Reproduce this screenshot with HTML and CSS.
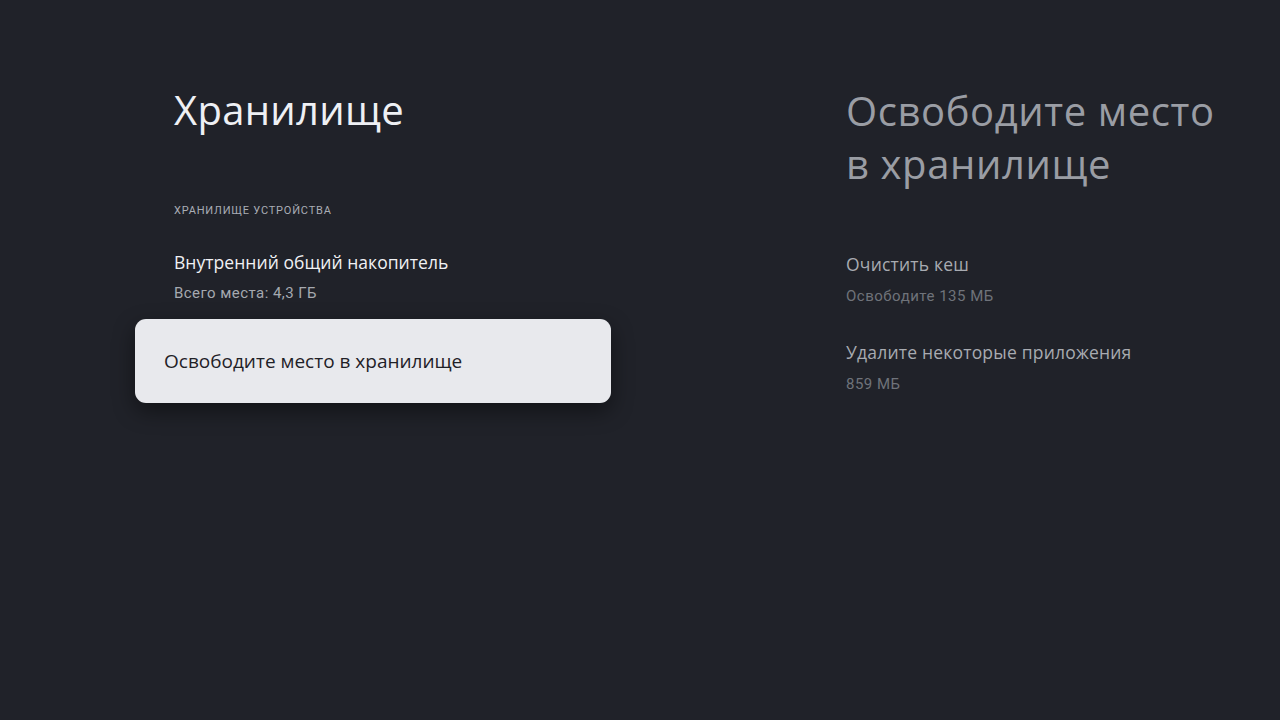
FILE: index.html
```html
<!DOCTYPE html>
<html lang="ru">
<head>
<meta charset="utf-8">
<link rel="stylesheet" href="styles.css">
</head>
<body>
<main class="screen">
  <section class="left">
    <h1 class="title">Хранилище</h1>
    <div class="category">ХРАНИЛИЩЕ УСТРОЙСТВА</div>
    <div class="item">
      <div class="item-title">Внутренний общий накопитель</div>
      <div class="item-sub">Всего места: 4,3 ГБ</div>
    </div>
    <div class="card">Освободите место в хранилище</div>
  </section>
  <section class="right">
    <h2 class="preview-title">Освободите место в&nbsp;хранилище</h2>
    <div class="preview-list">
      <div class="pitem">
        <div class="pitem-title">Очистить кеш</div>
        <div class="pitem-sub">Освободите 135 МБ</div>
      </div>
      <div class="pitem">
        <div class="pitem-title">Удалите некоторые приложения</div>
        <div class="pitem-sub">859 МБ</div>
      </div>
    </div>
  </section>
</main>
</body>
</html>
```

FILE: styles.css
```css
html, body {
  margin: 0;
  padding: 0;
  background: #202229;
}
body {
  width: 1280px;
  height: 720px;
  overflow: hidden;
  font-family: "Open Sans", "Noto Sans", sans-serif;
}
.screen {
  display: flex;
  height: 720px;
}
.left {
  width: 476px;
  margin-left: 135px;
  display: flex;
  flex-direction: column;
}
.title {
  margin: 84px 0 0 39px;
  font-weight: 400;
  font-size: 40px;
  line-height: 52px;
  color: #eef0f4;
  letter-spacing: 0.3px;
}
.category {
  margin: 68px 0 0 39px;
  font-family: Roboto, sans-serif;
  font-size: 11px;
  line-height: 14px;
  color: #a9adb5;
  letter-spacing: 0.8px;
}
.item {
  margin: 32px 0 0 39px;
}
.item-title {
  font-size: 17.5px;
  line-height: 24px;
  color: #f0f1f4;
  letter-spacing: 0.05px;
}
.item-sub {
  margin-top: 10px;
  font-family: Roboto, sans-serif;
  font-size: 15px;
  line-height: 18px;
  color: #a5a9b0;
  letter-spacing: 0.45px;
}
.card {
  margin-top: 17px;
  height: 84px;
  box-sizing: border-box;
  padding: 0 29px;
  display: flex;
  align-items: center;
  background: #e8e9ed;
  border-radius: 11px;
  font-size: 19px;
  color: #1f2127;
  box-shadow: 0 8px 22px rgba(0, 0, 0, 0.45);
}
.right {
  margin-left: 235px;
  width: 420px;
}
.preview-title {
  margin: 84px 0 0 0;
  font-weight: 400;
  font-size: 40px;
  line-height: 53px;
  color: #9a9da4;
  letter-spacing: 0.6px;
}
.preview-list {
  margin-top: 62px;
  display: flex;
  flex-direction: column;
  gap: 35px;
}
.pitem-title {
  font-size: 17.5px;
  line-height: 24px;
  color: #a8abb1;
  letter-spacing: 0.2px;
}
.pitem-sub {
  margin-top: 11px;
  font-family: Roboto, sans-serif;
  font-size: 15px;
  line-height: 18px;
  color: #6f737a;
  letter-spacing: 0.5px;
}
```
